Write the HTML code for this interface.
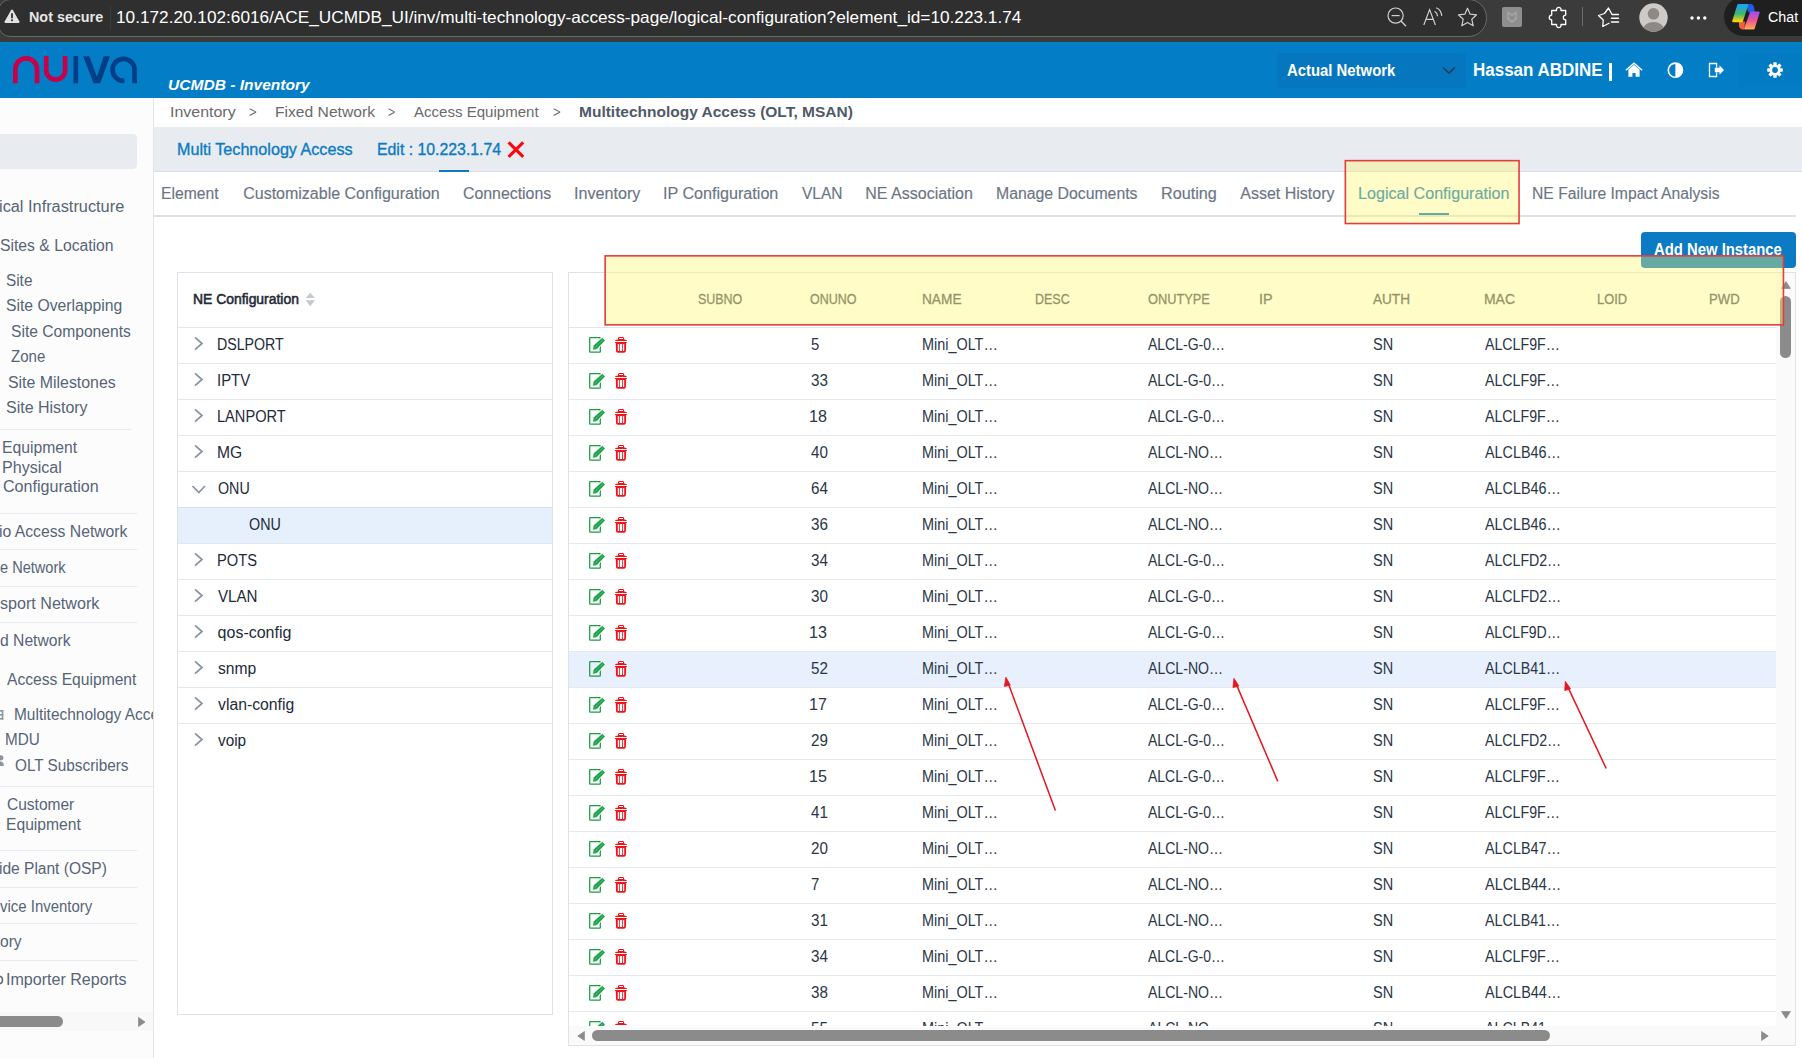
<!DOCTYPE html>
<html><head><meta charset="utf-8"><style>
*{box-sizing:border-box}
html,body{margin:0;padding:0;width:1802px;height:1058px;overflow:hidden;background:#fff;font-family:"Liberation Sans",sans-serif}
.t{position:absolute;white-space:pre;line-height:1;transform-origin:0 0}
.a{position:absolute}
.ic{position:absolute;overflow:visible}
.hl{position:absolute;height:1px;background:#e6e8ec}
.hl2{position:absolute;height:1px;background:#e3e7ed}
.sl{position:absolute;height:1px;background:#e6e9ee}
.clip{position:absolute;overflow:hidden}
</style></head><body>
<!-- browser chrome -->
<div class="a" style="left:0;top:0;width:1802px;height:42px;background:#3b3b3b"></div>
<div class="a" style="left:-2.5px;top:-0.6px;width:1489.5px;height:37.6px;background:#2f2f2f;border:1.3px solid #6a6a6a;border-radius:12px 18.6px 18.6px 12px"></div>
<div class="a" style="left:110px;top:6px;width:1px;height:24px;background:#3a3a3a"></div>
<svg class="ic" style="left:4px;top:9px" width="16" height="15" viewBox="0 0 16 15"><path d="M8 0.6 Q8.6 0.6 9 1.3 L15.4 12.6 Q15.9 13.8 14.6 14 H1.4 Q0.1 13.8 0.6 12.6 L7 1.3 Q7.4 0.6 8 0.6Z" fill="#e2e2e2"/><rect x="7.1" y="4.3" width="1.8" height="5" fill="#2f2f2f"/><rect x="7.1" y="10.4" width="1.8" height="1.8" fill="#2f2f2f"/></svg>
<svg class="ic" style="left:1386px;top:6px" width="22" height="22" viewBox="0 0 22 22"><circle cx="9.6" cy="9.6" r="7.6" fill="none" stroke="#cfcfcf" stroke-width="1.2"/><line x1="15" y1="15" x2="20" y2="20.2" stroke="#cfcfcf" stroke-width="1.3"/><line x1="5.6" y1="9.6" x2="13.6" y2="9.6" stroke="#cfcfcf" stroke-width="1.2"/></svg>
<svg class="ic" style="left:1423px;top:7px" width="21" height="19" viewBox="0 0 21 19"><path d="M0.8 18 L6.6 2.6 L12.4 18 M3 12.4 H10.2" fill="none" stroke="#cfcfcf" stroke-width="1.2"/><path d="M11.5 4.2 Q14.2 5.6 14.6 9.2 M13.2 0.8 Q18 2.6 18.8 8.8" fill="none" stroke="#cfcfcf" stroke-width="1.2"/></svg>
<svg class="ic" style="left:1457px;top:7px" width="21" height="21" viewBox="0 0 21 21"><path d="M10.5 1.2 L13.2 7.2 L19.6 7.8 L14.8 12.2 L16.2 18.8 L10.5 15.4 L4.8 18.8 L6.2 12.2 L1.4 7.8 L7.8 7.2 Z" fill="none" stroke="#cfcfcf" stroke-width="1.2" stroke-linejoin="round"/></svg>
<div class="a" style="left:1502px;top:7px;width:20px;height:20px;background:#8e8e8e;border-radius:2px"></div>
<svg class="ic" style="left:1505px;top:10px" width="14" height="14" viewBox="0 0 14 14"><path d="M3 2.5 L7 5 L11 2.5 V9 L7 12 L3 9 Z" fill="none" stroke="#a4a4a4" stroke-width="1.6"/></svg>
<svg class="ic" style="left:1548px;top:7px" width="22" height="22" viewBox="0 0 22 22"><path d="M3.7 3.5 H8.6 A2.3 2.3 0 1 1 12.9 3.5 H17.7 V8.1 A2.4 2.4 0 0 0 17.7 12.9 V17.5 H12.9 A2.3 2.3 0 1 1 8.6 17.5 H3.7 V12.9 A2.4 2.4 0 0 1 3.7 8.1 Z" fill="none" stroke="#ffffff" stroke-width="1.3" stroke-linejoin="round"/></svg>
<div class="a" style="left:1582px;top:7px;width:1px;height:19px;background:#6a6a6a"></div>
<svg class="ic" style="left:1596px;top:5px" width="24" height="24" viewBox="0 0 24 24"><path d="M13 18.25 L6.75 21.5 L7.25 15 L2.5 10.5 L8.5 8.5 L12.5 3 L16 9.5 H22.5" fill="none" stroke="#fff" stroke-width="1.3" stroke-linejoin="round" stroke-linecap="round"/><path d="M15.5 13.25 H22.5 M15.5 17 H22.5" stroke="#fff" stroke-width="1.5" stroke-linecap="round"/></svg>
<svg class="ic" style="left:1638.5px;top:2.5px" width="29" height="29" viewBox="0 0 29 29"><defs><clipPath id="pc"><circle cx="14.5" cy="14.5" r="14.2"/></clipPath></defs><circle cx="14.5" cy="14.5" r="14.2" fill="#cdcac7"/><g clip-path="url(#pc)"><circle cx="14.5" cy="10.8" r="5.8" fill="#8c8986"/><ellipse cx="14.5" cy="26.5" rx="10.5" ry="7.6" fill="#8c8986"/></g></svg>
<svg class="ic" style="left:1689px;top:14.5px" width="19" height="6" viewBox="0 0 19 6"><circle cx="3" cy="3" r="1.7" fill="#fff"/><circle cx="9.4" cy="3" r="1.7" fill="#fff"/><circle cx="15.8" cy="3" r="1.7" fill="#fff"/></svg>
<div class="a" style="left:1724px;top:-3px;width:110px;height:39px;background:#1f1f1f;border-radius:20px"></div>
<svg class="ic" style="left:1730px;top:3px" width="32" height="29" viewBox="0 0 32 29"><defs><linearGradient id="g1" x1="0" y1="0" x2="0" y2="1"><stop offset="0" stop-color="#1ba2f5"/><stop offset="0.55" stop-color="#3cba6a"/><stop offset="1" stop-color="#f6d50c"/></linearGradient><linearGradient id="g2" x1="0" y1="0" x2="0" y2="1"><stop offset="0" stop-color="#a24df0"/><stop offset="0.5" stop-color="#ef5690"/><stop offset="1" stop-color="#f9a35a"/></linearGradient></defs>
<path d="M16.5 1.6 H20.5 Q23 1.8 23.6 5 L24.2 9 H19 Z" fill="#1f5fe0" stroke="#1f5fe0" stroke-width="1.2" stroke-linejoin="round"/>
<path d="M9.5 19 H14.5 L13.6 26 H11.8 Q10 25.6 9.6 23 Z" fill="#f0603a" stroke="#f0603a" stroke-width="1.2" stroke-linejoin="round"/>
<path d="M8.4 2.1 H17.1 L11.8 18.2 H3.3 Z" fill="url(#g1)" stroke="url(#g1)" stroke-width="2.2" stroke-linejoin="round"/>
<path d="M21.2 9.5 H28.6 L23.6 25.5 H15.2 Z" fill="url(#g2)" stroke="url(#g2)" stroke-width="2.2" stroke-linejoin="round"/></svg>
<div class="t" style="left:28.67px;top:9.0px;font-size:15.5px;font-weight:700;color:#e6e6e6;transform:scaleX(0.9259);">Not secure</div>
<div class="t" style="left:116.36px;top:8.5px;font-size:16.5px;color:#ffffff;transform:scaleX(1.0428);">10.172.20.102:6016/ACE_UCMDB_UI/inv/multi-technology-access-page/logical-configuration?element_id=10.223.1.74</div>
<div class="t" style="left:1767.90px;top:9.2px;font-size:15.5px;color:#ffffff;transform:scaleX(0.9212);">Chat</div>
<!-- header -->
<div class="a" style="left:0;top:42px;width:1802px;height:56px;background:#037dc6"></div>
<svg class="ic" style="left:13px;top:56px" width="125" height="28" viewBox="0 0 125 28"><g fill="none" stroke-width="4.7" stroke-linecap="butt"><path d="M2.35 27.3 V13.2 A10.85 10.85 0 0 1 24.05 13.2 V27.3" stroke="#c8004a"/><path d="M33.2 0 V14.2 A9.45 9.45 0 0 0 52.1 14.2 V0" stroke="#c8004a"/><path d="M62.8 0 V27.3" stroke="#003f87"/><path d="M70.1 0.2 H76.3 L83.9 20.8 L90.7 0.2 H96.9 L87.2 27.3 H80.6 Z" fill="#003f87" stroke="none"/><path d="M121.6 27.3 V13.8 A11 11 0 1 0 110.6 24.8 H111.4" stroke="#003f87"/></g></svg>
<div class="a" style="left:1277px;top:53px;width:189px;height:35px;background:#0677be;border-radius:4px"></div>
<svg class="ic" style="left:1442px;top:66px" width="14" height="9" viewBox="0 0 14 9"><polyline points="1,1.5 7,7.2 13,1.5" fill="none" stroke="#173d63" stroke-width="1.6"/></svg>
<div class="a" style="left:1609px;top:63px;width:3.2px;height:17.5px;background:#fff"></div>
<div class="a" style="left:1738px;top:53.5px;width:64px;height:33.5px;background:#037bc3"></div>
<svg class="ic" style="left:1625px;top:62px" width="18" height="16" viewBox="0 0 18 16"><polyline points="0.8,8.2 9,1.2 17.2,8.2" fill="none" stroke="#fff" stroke-width="1.3"/><path d="M3.4 7.4 L9 2.8 L14.6 7.4 V14.8 H10.6 V11 H7.4 V14.8 H3.4 Z" fill="#fff"/></svg>
<svg class="ic" style="left:1666.5px;top:62px" width="17" height="17" viewBox="0 0 17 17"><circle cx="8.4" cy="8.2" r="7.1" fill="none" stroke="#fff" stroke-width="1.6"/><path d="M8.4 1.1 A7.1 7.1 0 0 1 8.4 15.3 Z" fill="#fff"/></svg>
<svg class="ic" style="left:1708px;top:62px" width="17" height="16" viewBox="0 0 17 16"><path d="M8.6 5.6 V1.5 H1.5 V14.5 H8.6 V10.6" fill="none" stroke="#fff" stroke-width="1.3"/><path d="M6.8 5.8 H11.5 V3.2 L16 8 L11.5 12.8 V10.3 H6.8 Z" fill="#fff"/></svg>
<svg class="ic" style="left:1766.5px;top:62px" width="16" height="16" viewBox="0 0 16 16"><g fill="#fff"><circle cx="8" cy="8" r="5.6"/><rect x="6.3" y="0.2" width="3.4" height="3" rx="0.6"/><rect x="6.3" y="12.8" width="3.4" height="3" rx="0.6"/><rect x="0.2" y="6.3" width="3" height="3.4" rx="0.6"/><rect x="12.8" y="6.3" width="3" height="3.4" rx="0.6"/><rect x="6.3" y="0.2" width="3.4" height="3" rx="0.6" transform="rotate(45 8 8)"/><rect x="6.3" y="12.8" width="3.4" height="3" rx="0.6" transform="rotate(45 8 8)"/><rect x="0.2" y="6.3" width="3" height="3.4" rx="0.6" transform="rotate(45 8 8)"/><rect x="12.8" y="6.3" width="3" height="3.4" rx="0.6" transform="rotate(45 8 8)"/></g><circle cx="8" cy="8" r="2.9" fill="#037bc3"/></svg>
<div class="t" style="left:168.30px;top:77.7px;font-size:14.5px;font-weight:700;font-style:italic;color:#ffffff;transform:scaleX(1.0725);">UCMDB - Inventory</div>
<div class="t" style="left:1286.90px;top:62.8px;font-size:16px;font-weight:700;color:#ffffff;transform:scaleX(0.9299);">Actual Network</div>
<div class="t" style="left:1473.03px;top:61.8px;font-size:17.5px;font-weight:700;color:#ffffff;transform:scaleX(0.9696);">Hassan ABDINE</div>
<!-- sidebar -->
<div class="a" style="left:0;top:98px;width:153px;height:960px;background:#fcfcfd"></div>
<div class="a" style="left:153px;top:98px;width:1px;height:960px;background:#e1e5ea"></div>
<div class="a" style="left:0;top:134px;width:137px;height:35px;background:#e8ebf0;border-radius:0 4px 4px 0"></div>
<div class="sl" style="left:0;top:429px;width:131px"></div><div class="sl" style="left:0;top:513px;width:137px"></div><div class="sl" style="left:0;top:549px;width:137px"></div><div class="sl" style="left:0;top:586px;width:137px"></div><div class="sl" style="left:0;top:622px;width:137px"></div><div class="sl" style="left:0;top:786px;width:153px"></div><div class="sl" style="left:0;top:850px;width:137px"></div><div class="sl" style="left:0;top:887px;width:137px"></div><div class="sl" style="left:0;top:923px;width:137px"></div><div class="sl" style="left:0;top:960px;width:137px"></div>
<div class="clip" style="left:0;top:98px;width:153px;height:914px"><div class="a" style="left:0;top:-98px;width:153px;height:1058px">
<div class="t" style="left:-1.02px;top:199.4px;font-size:16px;color:#566476;transform:scaleX(1.0204);">ical Infrastructure</div>
<div class="t" style="left:0.00px;top:238.4px;font-size:16px;color:#566476;transform:scaleX(0.9823);">Sites &amp; Location</div>
<div class="t" style="left:5.70px;top:273.0px;font-size:16px;color:#566476;transform:scaleX(0.9577);">Site</div>
<div class="t" style="left:5.70px;top:298.3px;font-size:16px;color:#566476;transform:scaleX(0.9822);">Site Overlapping</div>
<div class="t" style="left:10.60px;top:323.6px;font-size:16px;color:#566476;transform:scaleX(0.9761);">Site Components</div>
<div class="t" style="left:10.60px;top:348.6px;font-size:16px;color:#566476;transform:scaleX(0.9407);">Zone</div>
<div class="t" style="left:8.30px;top:374.8px;font-size:16px;color:#566476;transform:scaleX(0.9927);">Site Milestones</div>
<div class="t" style="left:5.70px;top:400.1px;font-size:16px;color:#566476;transform:scaleX(0.9976);">Site History</div>
<div class="t" style="left:2.32px;top:440.1px;font-size:16px;color:#566476;transform:scaleX(0.9810);">Equipment</div>
<div class="t" style="left:2.30px;top:460.1px;font-size:16px;color:#566476;transform:scaleX(1.0030);">Physical</div>
<div class="t" style="left:3.30px;top:479.0px;font-size:16px;color:#566476;transform:scaleX(1.0045);">Configuration</div>
<div class="t" style="left:-0.98px;top:524.0px;font-size:16px;color:#566476;transform:scaleX(0.9826);">io Access Network</div>
<div class="t" style="left:0.00px;top:560.3px;font-size:16px;color:#566476;transform:scaleX(0.9107);">e Network</div>
<div class="t" style="left:0.00px;top:596.2px;font-size:16px;color:#566476;transform:scaleX(1.0061);">sport Network</div>
<div class="t" style="left:0.00px;top:633.2px;font-size:16px;color:#566476;transform:scaleX(0.9791);">d Network</div>
<div class="t" style="left:7.30px;top:671.8px;font-size:16px;color:#566476;transform:scaleX(0.9762);">Access Equipment</div>
<div class="t" style="left:5.05px;top:732.3px;font-size:16px;color:#566476;transform:scaleX(0.9546);">MDU</div>
<div class="t" style="left:14.80px;top:758.1px;font-size:16px;color:#566476;transform:scaleX(0.9567);">OLT Subscribers</div>
<div class="t" style="left:7.30px;top:797.3px;font-size:16px;color:#566476;transform:scaleX(0.9697);">Customer</div>
<div class="t" style="left:6.32px;top:817.4px;font-size:16px;color:#566476;transform:scaleX(0.9783);">Equipment</div>
<div class="t" style="left:-0.97px;top:861.0px;font-size:16px;color:#566476;transform:scaleX(0.9706);">ide Plant (OSP)</div>
<div class="t" style="left:0.00px;top:898.6px;font-size:16px;color:#566476;transform:scaleX(0.9340);">vice Inventory</div>
<div class="t" style="left:0.00px;top:933.8px;font-size:16px;color:#566476;transform:scaleX(0.9718);">ory</div>
<div class="t" style="left:5.80px;top:971.6px;font-size:16px;color:#566476;transform:scaleX(1.0039);">Importer Reports</div>
<div class="t" style="left:14.13px;top:707.2px;font-size:16px;color:#566476;transform:scaleX(0.9652);">Multitechnology Access</div>
</div></div>
<svg class="ic" style="left:0;top:709px" width="4" height="13" viewBox="0 0 4 13"><rect x="0" y="1" width="3.3" height="1.6" fill="#8a94a2"/><rect x="0" y="5" width="3.3" height="1.6" fill="#8a94a2"/><rect x="0" y="9" width="3.3" height="1.6" fill="#8a94a2"/><rect x="1.7" y="1" width="1.6" height="9.6" fill="#8a94a2"/></svg>
<svg class="ic" style="left:0;top:755px" width="4" height="12" viewBox="0 0 4 12"><circle cx="0.8" cy="2.8" r="2.6" fill="#8a94a2"/><path d="M-4 11 Q-4 6.4 0.8 6.4 Q3.8 6.4 3.8 11 Z" fill="#8a94a2"/></svg>
<svg class="ic" style="left:0;top:974.5px" width="3" height="10" viewBox="0 0 3 10"><path d="M0 1.2 Q2.5 2 2.5 5 Q2.5 8 0 8.8" fill="none" stroke="#566476" stroke-width="1.5"/></svg>
<div class="a" style="left:0;top:1012px;width:153px;height:19px;background:#f8f8f8"></div>
<div class="a" style="left:-6px;top:1016.3px;width:69px;height:10.6px;background:#8b8b8b;border-radius:5.3px"></div>
<svg class="ic" style="left:138px;top:1017px" width="8" height="10" viewBox="0 0 8 10"><path d="M0.5 0.5 L7 5 L0.5 9.5 Z" fill="#8b8b8b" stroke="#8b8b8b" stroke-width="0.8" stroke-linejoin="round"/></svg>
<!-- breadcrumb / tab header -->
<div class="a" style="left:154px;top:127px;width:1648px;height:45px;background:#e8ebf0;border-bottom:1px solid #d8dde4"></div>
<div class="a" style="left:439px;top:169.8px;width:30px;height:2.6px;background:#0b7bc3"></div>
<svg class="ic" style="left:507px;top:141px" width="18" height="17" viewBox="0 0 18 17"><path d="M1.6 1.4 L16.2 15.8 M16.2 1.4 L1.6 15.8" stroke="#f7090f" stroke-width="3.1"/></svg>
<div class="a" style="left:154px;top:215px;width:1642px;height:2px;background:#dcdfe4"></div>
<div class="a" style="left:1419px;top:212.6px;width:30px;height:2.4px;background:#0b7bc3"></div>
<div class="a" style="left:1641px;top:232px;width:155px;height:36px;background:#0b7bc3;border-radius:4px"></div>
<!-- NE config panel -->
<div class="a" style="left:177px;top:272px;width:376px;height:743px;border:1px solid #dde2ea"></div>
<div class="a" style="left:178px;top:507px;width:374px;height:36px;background:#e6f0fc"></div>
<div class="hl2" style="left:178px;top:327px;width:374px"></div><div class="hl2" style="left:178px;top:363px;width:374px"></div><div class="hl2" style="left:178px;top:399px;width:374px"></div><div class="hl2" style="left:178px;top:435px;width:374px"></div><div class="hl2" style="left:178px;top:471px;width:374px"></div><div class="hl2" style="left:178px;top:507px;width:374px"></div><div class="hl2" style="left:178px;top:543px;width:374px"></div><div class="hl2" style="left:178px;top:579px;width:374px"></div><div class="hl2" style="left:178px;top:615px;width:374px"></div><div class="hl2" style="left:178px;top:651px;width:374px"></div><div class="hl2" style="left:178px;top:687px;width:374px"></div><div class="hl2" style="left:178px;top:723px;width:374px"></div>
<div class="a" style="left:178px;top:507px;width:374px;height:1px;background:#d6dfea"></div>
<svg class="ic" style="left:193px;top:336px" width="12" height="16" viewBox="0 0 12 16"><polyline points="2,1.3 9,7.5 2,13.7" fill="none" stroke="#8792a1" stroke-width="1.7"/></svg><svg class="ic" style="left:193px;top:372px" width="12" height="16" viewBox="0 0 12 16"><polyline points="2,1.3 9,7.5 2,13.7" fill="none" stroke="#8792a1" stroke-width="1.7"/></svg><svg class="ic" style="left:193px;top:408px" width="12" height="16" viewBox="0 0 12 16"><polyline points="2,1.3 9,7.5 2,13.7" fill="none" stroke="#8792a1" stroke-width="1.7"/></svg><svg class="ic" style="left:193px;top:444px" width="12" height="16" viewBox="0 0 12 16"><polyline points="2,1.3 9,7.5 2,13.7" fill="none" stroke="#8792a1" stroke-width="1.7"/></svg><svg class="ic" style="left:193px;top:552px" width="12" height="16" viewBox="0 0 12 16"><polyline points="2,1.3 9,7.5 2,13.7" fill="none" stroke="#8792a1" stroke-width="1.7"/></svg><svg class="ic" style="left:193px;top:588px" width="12" height="16" viewBox="0 0 12 16"><polyline points="2,1.3 9,7.5 2,13.7" fill="none" stroke="#8792a1" stroke-width="1.7"/></svg><svg class="ic" style="left:193px;top:624px" width="12" height="16" viewBox="0 0 12 16"><polyline points="2,1.3 9,7.5 2,13.7" fill="none" stroke="#8792a1" stroke-width="1.7"/></svg><svg class="ic" style="left:193px;top:660px" width="12" height="16" viewBox="0 0 12 16"><polyline points="2,1.3 9,7.5 2,13.7" fill="none" stroke="#8792a1" stroke-width="1.7"/></svg><svg class="ic" style="left:193px;top:696px" width="12" height="16" viewBox="0 0 12 16"><polyline points="2,1.3 9,7.5 2,13.7" fill="none" stroke="#8792a1" stroke-width="1.7"/></svg><svg class="ic" style="left:193px;top:732px" width="12" height="16" viewBox="0 0 12 16"><polyline points="2,1.3 9,7.5 2,13.7" fill="none" stroke="#8792a1" stroke-width="1.7"/></svg>
<svg class="ic" style="left:191px;top:484px" width="16" height="11" viewBox="0 0 16 11"><polyline points="1.5,2 7.8,8.6 14,2" fill="none" stroke="#8792a1" stroke-width="1.7"/></svg>
<svg class="ic" style="left:305px;top:291.5px" width="11" height="15" viewBox="0 0 11 15"><path d="M5.2 0.8 L10 6 H0.6 Z" fill="#c5c9d0"/><path d="M5.2 14.2 L10 8.2 H0.6 Z" fill="#c5c9d0"/></svg>
<div class="t" style="left:170.37px;top:104.0px;font-size:15.5px;color:#6a6a6a;transform:scaleX(1.0301);">Inventory</div>
<div class="t" style="left:249.30px;top:104.0px;font-size:15.5px;color:#6a6a6a;transform:scaleX(0.8444);">&gt;</div>
<div class="t" style="left:274.89px;top:104.0px;font-size:15.5px;color:#6a6a6a;transform:scaleX(1.0091);">Fixed Network</div>
<div class="t" style="left:388.10px;top:104.0px;font-size:15.5px;color:#6a6a6a;transform:scaleX(0.8000);">&gt;</div>
<div class="t" style="left:414.10px;top:104.0px;font-size:15.5px;color:#6a6a6a;transform:scaleX(0.9709);">Access Equipment</div>
<div class="t" style="left:553.00px;top:104.0px;font-size:15.5px;color:#6a6a6a;transform:scaleX(0.8444);">&gt;</div>
<div class="t" style="left:579.00px;top:104.0px;font-size:15.5px;font-weight:700;color:#4f5a68;">Multitechnology Access (OLT, MSAN)</div>
<div class="t" style="left:177.22px;top:141.0px;font-size:16.5px;color:#0b7bc3;transform:scaleX(0.9782);-webkit-text-stroke:0.35px #0b7bc3;">Multi Technology Access</div>
<div class="t" style="left:377.04px;top:141.0px;font-size:16.5px;color:#0b7bc3;transform:scaleX(0.9596);-webkit-text-stroke:0.35px #0b7bc3;">Edit : 10.223.1.74</div>
<div class="t" style="left:161.22px;top:186.0px;font-size:16px;color:#6b7585;transform:scaleX(0.9803);-webkit-text-stroke:0.15px #6b7585;">Element</div>
<div class="t" style="left:243.20px;top:186.0px;font-size:16px;color:#6b7585;-webkit-text-stroke:0.15px #6b7585;">Customizable Configuration</div>
<div class="t" style="left:463.00px;top:186.0px;font-size:16px;color:#6b7585;transform:scaleX(0.9916);-webkit-text-stroke:0.15px #6b7585;">Connections</div>
<div class="t" style="left:574.09px;top:186.0px;font-size:16px;color:#6b7585;transform:scaleX(1.0075);-webkit-text-stroke:0.15px #6b7585;">Inventory</div>
<div class="t" style="left:663.39px;top:186.0px;font-size:16px;color:#6b7585;transform:scaleX(1.0077);-webkit-text-stroke:0.15px #6b7585;">IP Configuration</div>
<div class="t" style="left:801.80px;top:186.0px;font-size:16px;color:#6b7585;transform:scaleX(0.9699);-webkit-text-stroke:0.15px #6b7585;">VLAN</div>
<div class="t" style="left:865.30px;top:186.0px;font-size:16px;color:#6b7585;-webkit-text-stroke:0.15px #6b7585;">NE Association</div>
<div class="t" style="left:996.21px;top:186.0px;font-size:16px;color:#6b7585;transform:scaleX(0.9881);-webkit-text-stroke:0.15px #6b7585;">Manage Documents</div>
<div class="t" style="left:1161.19px;top:186.0px;font-size:16px;color:#6b7585;transform:scaleX(1.0103);-webkit-text-stroke:0.15px #6b7585;">Routing</div>
<div class="t" style="left:1240.30px;top:186.0px;font-size:16px;color:#6b7585;-webkit-text-stroke:0.15px #6b7585;">Asset History</div>
<div class="t" style="left:1358.29px;top:186.0px;font-size:16px;color:#0b7bc3;transform:scaleX(1.0073);-webkit-text-stroke:0.15px #0b7bc3;">Logical Configuration</div>
<div class="t" style="left:1532.02px;top:186.0px;font-size:16px;color:#6b7585;transform:scaleX(0.9808);-webkit-text-stroke:0.15px #6b7585;">NE Failure Impact Analysis</div>
<div class="t" style="left:1654.30px;top:241.1px;font-size:16.5px;font-weight:700;color:#ffffff;transform:scaleX(0.8997);">Add New Instance</div>
<div class="t" style="left:192.71px;top:292.0px;font-size:14px;color:#1f2a37;transform:scaleX(0.9931);-webkit-text-stroke:0.55px #1f2a37;">NE Configuration</div>
<div class="t" style="left:216.71px;top:337.0px;font-size:16px;color:#1e2a3a;transform:scaleX(0.8872);">DSLPORT</div>
<div class="t" style="left:216.67px;top:373.0px;font-size:16px;color:#1e2a3a;transform:scaleX(0.9343);">IPTV</div>
<div class="t" style="left:216.69px;top:409.0px;font-size:16px;color:#1e2a3a;transform:scaleX(0.9127);">LANPORT</div>
<div class="t" style="left:216.62px;top:445.0px;font-size:16px;color:#1e2a3a;transform:scaleX(0.9783);">MG</div>
<div class="t" style="left:217.60px;top:481.0px;font-size:16px;color:#1e2a3a;transform:scaleX(0.8914);">ONU</div>
<div class="t" style="left:249.10px;top:517.0px;font-size:16px;color:#1e2a3a;transform:scaleX(0.8943);">ONU</div>
<div class="t" style="left:216.68px;top:553.0px;font-size:16px;color:#1e2a3a;transform:scaleX(0.9167);">POTS</div>
<div class="t" style="left:217.60px;top:589.0px;font-size:16px;color:#1e2a3a;transform:scaleX(0.9456);">VLAN</div>
<div class="t" style="left:217.60px;top:625.0px;font-size:16px;color:#1e2a3a;">qos-config</div>
<div class="t" style="left:217.60px;top:661.0px;font-size:16px;color:#1e2a3a;transform:scaleX(0.9789);">snmp</div>
<div class="t" style="left:217.60px;top:697.0px;font-size:16px;color:#1e2a3a;transform:scaleX(0.9846);">vlan-config</div>
<div class="t" style="left:217.60px;top:733.0px;font-size:16px;color:#1e2a3a;transform:scaleX(0.9575);">voip</div>
<div class="t" style="left:698.00px;top:291.7px;font-size:14px;color:#4f5866;transform:scaleX(0.8898);-webkit-text-stroke:0.3px #4f5866;">SUBNO</div>
<div class="t" style="left:810.47px;top:291.7px;font-size:14px;color:#4f5866;transform:scaleX(0.8924);-webkit-text-stroke:0.3px #4f5866;">ONUNO</div>
<div class="t" style="left:921.96px;top:291.7px;font-size:14px;color:#4f5866;transform:scaleX(0.9767);-webkit-text-stroke:0.3px #4f5866;">NAME</div>
<div class="t" style="left:1034.52px;top:291.7px;font-size:14px;color:#4f5866;transform:scaleX(0.8919);-webkit-text-stroke:0.3px #4f5866;">DESC</div>
<div class="t" style="left:1147.88px;top:291.7px;font-size:14px;color:#4f5866;transform:scaleX(0.9133);-webkit-text-stroke:0.3px #4f5866;">ONUTYPE</div>
<div class="t" style="left:1259.32px;top:291.7px;font-size:14px;color:#4f5866;transform:scaleX(1.0261);-webkit-text-stroke:0.3px #4f5866;">IP</div>
<div class="t" style="left:1372.82px;top:291.7px;font-size:14px;color:#4f5866;transform:scaleX(0.9703);-webkit-text-stroke:0.3px #4f5866;">AUTH</div>
<div class="t" style="left:1484.29px;top:291.7px;font-size:14px;color:#4f5866;transform:scaleX(0.9967);-webkit-text-stroke:0.3px #4f5866;">MAC</div>
<div class="t" style="left:1596.84px;top:291.7px;font-size:14px;color:#4f5866;transform:scaleX(0.9219);-webkit-text-stroke:0.3px #4f5866;">LOID</div>
<div class="t" style="left:1709.29px;top:291.7px;font-size:14px;color:#4f5866;transform:scaleX(0.9381);-webkit-text-stroke:0.3px #4f5866;">PWD</div>
<!-- grid -->
<div class="a" style="left:568px;top:272px;width:1228px;height:774px;border:1px solid #dde2ea"></div>
<div class="a" style="left:569px;top:327px;width:1207px;height:1px;background:#e2e5ea"></div>
<div class="clip" style="left:569px;top:328px;width:1207px;height:698px">
 <div class="a" style="left:0;top:323px;width:1207px;height:36px;background:#e7f0fc"></div>
</div>
<div class="hl" style="left:569px;top:363px;width:1207px"></div><div class="hl" style="left:569px;top:399px;width:1207px"></div><div class="hl" style="left:569px;top:435px;width:1207px"></div><div class="hl" style="left:569px;top:471px;width:1207px"></div><div class="hl" style="left:569px;top:507px;width:1207px"></div><div class="hl" style="left:569px;top:543px;width:1207px"></div><div class="hl" style="left:569px;top:579px;width:1207px"></div><div class="hl" style="left:569px;top:615px;width:1207px"></div><div class="hl" style="left:569px;top:651px;width:1207px"></div><div class="hl" style="left:569px;top:687px;width:1207px"></div><div class="hl" style="left:569px;top:723px;width:1207px"></div><div class="hl" style="left:569px;top:759px;width:1207px"></div><div class="hl" style="left:569px;top:795px;width:1207px"></div><div class="hl" style="left:569px;top:831px;width:1207px"></div><div class="hl" style="left:569px;top:867px;width:1207px"></div><div class="hl" style="left:569px;top:903px;width:1207px"></div><div class="hl" style="left:569px;top:939px;width:1207px"></div><div class="hl" style="left:569px;top:975px;width:1207px"></div><div class="hl" style="left:569px;top:1011px;width:1207px"></div>
<div class="clip" style="left:0;top:328px;width:1776px;height:698px">
<div class="a" style="left:0;top:-328px;width:1776px;height:1058px">
<svg class="ic" style="left:588px;top:336px" width="18" height="18" viewBox="0 0 18 18"><rect x="1.7" y="1.5" width="10.6" height="14.7" rx="0.6" fill="none" stroke="#17a045" stroke-width="1.25"/><path d="M5.1 13.6 L6.1 9.3 L14.4 2 L16.8 4.4 L8.8 12.8 Z" fill="#fff" stroke="#fff" stroke-width="2.2" stroke-linejoin="round"/><path d="M5.1 13.6 L6.1 9.3 L14.4 2 L16.8 4.4 L8.8 12.8 Z" fill="#17a045" stroke="#17a045" stroke-width="0.4" stroke-linejoin="round"/><path d="M6.7 11.8 L15.1 3.6" stroke="#fff" stroke-width="0.7" stroke-dasharray="0.9 1.3"/></svg><svg class="ic" style="left:614px;top:336px" width="14" height="18" viewBox="0 0 14 18"><path d="M0.9 5 Q1 3.6 3.8 3.4 L4.3 1.5 Q4.5 1 5.1 1 H9 Q9.6 1 9.8 1.5 L10.3 3.4 Q12.9 3.6 13 5 Z" fill="#f0141a"/><rect x="5.2" y="2" width="3.8" height="1" fill="#fff"/><rect x="0.9" y="6" width="12.1" height="1.1" rx="0.4" fill="#f0141a"/><path d="M1.8 7 H12.1 L11.9 15 Q11.8 16.8 10 16.8 H3.9 Q2.1 16.8 2 15 Z" fill="#f0141a"/><rect x="3.8" y="8" width="1.4" height="7" rx="0.6" fill="#fff"/><rect x="6" y="8" width="2.1" height="7" rx="0.6" fill="#fff"/><rect x="8.9" y="8" width="1.3" height="7" rx="0.6" fill="#fff"/></svg><svg class="ic" style="left:588px;top:372px" width="18" height="18" viewBox="0 0 18 18"><rect x="1.7" y="1.5" width="10.6" height="14.7" rx="0.6" fill="none" stroke="#17a045" stroke-width="1.25"/><path d="M5.1 13.6 L6.1 9.3 L14.4 2 L16.8 4.4 L8.8 12.8 Z" fill="#fff" stroke="#fff" stroke-width="2.2" stroke-linejoin="round"/><path d="M5.1 13.6 L6.1 9.3 L14.4 2 L16.8 4.4 L8.8 12.8 Z" fill="#17a045" stroke="#17a045" stroke-width="0.4" stroke-linejoin="round"/><path d="M6.7 11.8 L15.1 3.6" stroke="#fff" stroke-width="0.7" stroke-dasharray="0.9 1.3"/></svg><svg class="ic" style="left:614px;top:372px" width="14" height="18" viewBox="0 0 14 18"><path d="M0.9 5 Q1 3.6 3.8 3.4 L4.3 1.5 Q4.5 1 5.1 1 H9 Q9.6 1 9.8 1.5 L10.3 3.4 Q12.9 3.6 13 5 Z" fill="#f0141a"/><rect x="5.2" y="2" width="3.8" height="1" fill="#fff"/><rect x="0.9" y="6" width="12.1" height="1.1" rx="0.4" fill="#f0141a"/><path d="M1.8 7 H12.1 L11.9 15 Q11.8 16.8 10 16.8 H3.9 Q2.1 16.8 2 15 Z" fill="#f0141a"/><rect x="3.8" y="8" width="1.4" height="7" rx="0.6" fill="#fff"/><rect x="6" y="8" width="2.1" height="7" rx="0.6" fill="#fff"/><rect x="8.9" y="8" width="1.3" height="7" rx="0.6" fill="#fff"/></svg><svg class="ic" style="left:588px;top:408px" width="18" height="18" viewBox="0 0 18 18"><rect x="1.7" y="1.5" width="10.6" height="14.7" rx="0.6" fill="none" stroke="#17a045" stroke-width="1.25"/><path d="M5.1 13.6 L6.1 9.3 L14.4 2 L16.8 4.4 L8.8 12.8 Z" fill="#fff" stroke="#fff" stroke-width="2.2" stroke-linejoin="round"/><path d="M5.1 13.6 L6.1 9.3 L14.4 2 L16.8 4.4 L8.8 12.8 Z" fill="#17a045" stroke="#17a045" stroke-width="0.4" stroke-linejoin="round"/><path d="M6.7 11.8 L15.1 3.6" stroke="#fff" stroke-width="0.7" stroke-dasharray="0.9 1.3"/></svg><svg class="ic" style="left:614px;top:408px" width="14" height="18" viewBox="0 0 14 18"><path d="M0.9 5 Q1 3.6 3.8 3.4 L4.3 1.5 Q4.5 1 5.1 1 H9 Q9.6 1 9.8 1.5 L10.3 3.4 Q12.9 3.6 13 5 Z" fill="#f0141a"/><rect x="5.2" y="2" width="3.8" height="1" fill="#fff"/><rect x="0.9" y="6" width="12.1" height="1.1" rx="0.4" fill="#f0141a"/><path d="M1.8 7 H12.1 L11.9 15 Q11.8 16.8 10 16.8 H3.9 Q2.1 16.8 2 15 Z" fill="#f0141a"/><rect x="3.8" y="8" width="1.4" height="7" rx="0.6" fill="#fff"/><rect x="6" y="8" width="2.1" height="7" rx="0.6" fill="#fff"/><rect x="8.9" y="8" width="1.3" height="7" rx="0.6" fill="#fff"/></svg><svg class="ic" style="left:588px;top:444px" width="18" height="18" viewBox="0 0 18 18"><rect x="1.7" y="1.5" width="10.6" height="14.7" rx="0.6" fill="none" stroke="#17a045" stroke-width="1.25"/><path d="M5.1 13.6 L6.1 9.3 L14.4 2 L16.8 4.4 L8.8 12.8 Z" fill="#fff" stroke="#fff" stroke-width="2.2" stroke-linejoin="round"/><path d="M5.1 13.6 L6.1 9.3 L14.4 2 L16.8 4.4 L8.8 12.8 Z" fill="#17a045" stroke="#17a045" stroke-width="0.4" stroke-linejoin="round"/><path d="M6.7 11.8 L15.1 3.6" stroke="#fff" stroke-width="0.7" stroke-dasharray="0.9 1.3"/></svg><svg class="ic" style="left:614px;top:444px" width="14" height="18" viewBox="0 0 14 18"><path d="M0.9 5 Q1 3.6 3.8 3.4 L4.3 1.5 Q4.5 1 5.1 1 H9 Q9.6 1 9.8 1.5 L10.3 3.4 Q12.9 3.6 13 5 Z" fill="#f0141a"/><rect x="5.2" y="2" width="3.8" height="1" fill="#fff"/><rect x="0.9" y="6" width="12.1" height="1.1" rx="0.4" fill="#f0141a"/><path d="M1.8 7 H12.1 L11.9 15 Q11.8 16.8 10 16.8 H3.9 Q2.1 16.8 2 15 Z" fill="#f0141a"/><rect x="3.8" y="8" width="1.4" height="7" rx="0.6" fill="#fff"/><rect x="6" y="8" width="2.1" height="7" rx="0.6" fill="#fff"/><rect x="8.9" y="8" width="1.3" height="7" rx="0.6" fill="#fff"/></svg><svg class="ic" style="left:588px;top:480px" width="18" height="18" viewBox="0 0 18 18"><rect x="1.7" y="1.5" width="10.6" height="14.7" rx="0.6" fill="none" stroke="#17a045" stroke-width="1.25"/><path d="M5.1 13.6 L6.1 9.3 L14.4 2 L16.8 4.4 L8.8 12.8 Z" fill="#fff" stroke="#fff" stroke-width="2.2" stroke-linejoin="round"/><path d="M5.1 13.6 L6.1 9.3 L14.4 2 L16.8 4.4 L8.8 12.8 Z" fill="#17a045" stroke="#17a045" stroke-width="0.4" stroke-linejoin="round"/><path d="M6.7 11.8 L15.1 3.6" stroke="#fff" stroke-width="0.7" stroke-dasharray="0.9 1.3"/></svg><svg class="ic" style="left:614px;top:480px" width="14" height="18" viewBox="0 0 14 18"><path d="M0.9 5 Q1 3.6 3.8 3.4 L4.3 1.5 Q4.5 1 5.1 1 H9 Q9.6 1 9.8 1.5 L10.3 3.4 Q12.9 3.6 13 5 Z" fill="#f0141a"/><rect x="5.2" y="2" width="3.8" height="1" fill="#fff"/><rect x="0.9" y="6" width="12.1" height="1.1" rx="0.4" fill="#f0141a"/><path d="M1.8 7 H12.1 L11.9 15 Q11.8 16.8 10 16.8 H3.9 Q2.1 16.8 2 15 Z" fill="#f0141a"/><rect x="3.8" y="8" width="1.4" height="7" rx="0.6" fill="#fff"/><rect x="6" y="8" width="2.1" height="7" rx="0.6" fill="#fff"/><rect x="8.9" y="8" width="1.3" height="7" rx="0.6" fill="#fff"/></svg><svg class="ic" style="left:588px;top:516px" width="18" height="18" viewBox="0 0 18 18"><rect x="1.7" y="1.5" width="10.6" height="14.7" rx="0.6" fill="none" stroke="#17a045" stroke-width="1.25"/><path d="M5.1 13.6 L6.1 9.3 L14.4 2 L16.8 4.4 L8.8 12.8 Z" fill="#fff" stroke="#fff" stroke-width="2.2" stroke-linejoin="round"/><path d="M5.1 13.6 L6.1 9.3 L14.4 2 L16.8 4.4 L8.8 12.8 Z" fill="#17a045" stroke="#17a045" stroke-width="0.4" stroke-linejoin="round"/><path d="M6.7 11.8 L15.1 3.6" stroke="#fff" stroke-width="0.7" stroke-dasharray="0.9 1.3"/></svg><svg class="ic" style="left:614px;top:516px" width="14" height="18" viewBox="0 0 14 18"><path d="M0.9 5 Q1 3.6 3.8 3.4 L4.3 1.5 Q4.5 1 5.1 1 H9 Q9.6 1 9.8 1.5 L10.3 3.4 Q12.9 3.6 13 5 Z" fill="#f0141a"/><rect x="5.2" y="2" width="3.8" height="1" fill="#fff"/><rect x="0.9" y="6" width="12.1" height="1.1" rx="0.4" fill="#f0141a"/><path d="M1.8 7 H12.1 L11.9 15 Q11.8 16.8 10 16.8 H3.9 Q2.1 16.8 2 15 Z" fill="#f0141a"/><rect x="3.8" y="8" width="1.4" height="7" rx="0.6" fill="#fff"/><rect x="6" y="8" width="2.1" height="7" rx="0.6" fill="#fff"/><rect x="8.9" y="8" width="1.3" height="7" rx="0.6" fill="#fff"/></svg><svg class="ic" style="left:588px;top:552px" width="18" height="18" viewBox="0 0 18 18"><rect x="1.7" y="1.5" width="10.6" height="14.7" rx="0.6" fill="none" stroke="#17a045" stroke-width="1.25"/><path d="M5.1 13.6 L6.1 9.3 L14.4 2 L16.8 4.4 L8.8 12.8 Z" fill="#fff" stroke="#fff" stroke-width="2.2" stroke-linejoin="round"/><path d="M5.1 13.6 L6.1 9.3 L14.4 2 L16.8 4.4 L8.8 12.8 Z" fill="#17a045" stroke="#17a045" stroke-width="0.4" stroke-linejoin="round"/><path d="M6.7 11.8 L15.1 3.6" stroke="#fff" stroke-width="0.7" stroke-dasharray="0.9 1.3"/></svg><svg class="ic" style="left:614px;top:552px" width="14" height="18" viewBox="0 0 14 18"><path d="M0.9 5 Q1 3.6 3.8 3.4 L4.3 1.5 Q4.5 1 5.1 1 H9 Q9.6 1 9.8 1.5 L10.3 3.4 Q12.9 3.6 13 5 Z" fill="#f0141a"/><rect x="5.2" y="2" width="3.8" height="1" fill="#fff"/><rect x="0.9" y="6" width="12.1" height="1.1" rx="0.4" fill="#f0141a"/><path d="M1.8 7 H12.1 L11.9 15 Q11.8 16.8 10 16.8 H3.9 Q2.1 16.8 2 15 Z" fill="#f0141a"/><rect x="3.8" y="8" width="1.4" height="7" rx="0.6" fill="#fff"/><rect x="6" y="8" width="2.1" height="7" rx="0.6" fill="#fff"/><rect x="8.9" y="8" width="1.3" height="7" rx="0.6" fill="#fff"/></svg><svg class="ic" style="left:588px;top:588px" width="18" height="18" viewBox="0 0 18 18"><rect x="1.7" y="1.5" width="10.6" height="14.7" rx="0.6" fill="none" stroke="#17a045" stroke-width="1.25"/><path d="M5.1 13.6 L6.1 9.3 L14.4 2 L16.8 4.4 L8.8 12.8 Z" fill="#fff" stroke="#fff" stroke-width="2.2" stroke-linejoin="round"/><path d="M5.1 13.6 L6.1 9.3 L14.4 2 L16.8 4.4 L8.8 12.8 Z" fill="#17a045" stroke="#17a045" stroke-width="0.4" stroke-linejoin="round"/><path d="M6.7 11.8 L15.1 3.6" stroke="#fff" stroke-width="0.7" stroke-dasharray="0.9 1.3"/></svg><svg class="ic" style="left:614px;top:588px" width="14" height="18" viewBox="0 0 14 18"><path d="M0.9 5 Q1 3.6 3.8 3.4 L4.3 1.5 Q4.5 1 5.1 1 H9 Q9.6 1 9.8 1.5 L10.3 3.4 Q12.9 3.6 13 5 Z" fill="#f0141a"/><rect x="5.2" y="2" width="3.8" height="1" fill="#fff"/><rect x="0.9" y="6" width="12.1" height="1.1" rx="0.4" fill="#f0141a"/><path d="M1.8 7 H12.1 L11.9 15 Q11.8 16.8 10 16.8 H3.9 Q2.1 16.8 2 15 Z" fill="#f0141a"/><rect x="3.8" y="8" width="1.4" height="7" rx="0.6" fill="#fff"/><rect x="6" y="8" width="2.1" height="7" rx="0.6" fill="#fff"/><rect x="8.9" y="8" width="1.3" height="7" rx="0.6" fill="#fff"/></svg><svg class="ic" style="left:588px;top:624px" width="18" height="18" viewBox="0 0 18 18"><rect x="1.7" y="1.5" width="10.6" height="14.7" rx="0.6" fill="none" stroke="#17a045" stroke-width="1.25"/><path d="M5.1 13.6 L6.1 9.3 L14.4 2 L16.8 4.4 L8.8 12.8 Z" fill="#fff" stroke="#fff" stroke-width="2.2" stroke-linejoin="round"/><path d="M5.1 13.6 L6.1 9.3 L14.4 2 L16.8 4.4 L8.8 12.8 Z" fill="#17a045" stroke="#17a045" stroke-width="0.4" stroke-linejoin="round"/><path d="M6.7 11.8 L15.1 3.6" stroke="#fff" stroke-width="0.7" stroke-dasharray="0.9 1.3"/></svg><svg class="ic" style="left:614px;top:624px" width="14" height="18" viewBox="0 0 14 18"><path d="M0.9 5 Q1 3.6 3.8 3.4 L4.3 1.5 Q4.5 1 5.1 1 H9 Q9.6 1 9.8 1.5 L10.3 3.4 Q12.9 3.6 13 5 Z" fill="#f0141a"/><rect x="5.2" y="2" width="3.8" height="1" fill="#fff"/><rect x="0.9" y="6" width="12.1" height="1.1" rx="0.4" fill="#f0141a"/><path d="M1.8 7 H12.1 L11.9 15 Q11.8 16.8 10 16.8 H3.9 Q2.1 16.8 2 15 Z" fill="#f0141a"/><rect x="3.8" y="8" width="1.4" height="7" rx="0.6" fill="#fff"/><rect x="6" y="8" width="2.1" height="7" rx="0.6" fill="#fff"/><rect x="8.9" y="8" width="1.3" height="7" rx="0.6" fill="#fff"/></svg><svg class="ic" style="left:588px;top:660px" width="18" height="18" viewBox="0 0 18 18"><rect x="1.7" y="1.5" width="10.6" height="14.7" rx="0.6" fill="none" stroke="#17a045" stroke-width="1.25"/><path d="M5.1 13.6 L6.1 9.3 L14.4 2 L16.8 4.4 L8.8 12.8 Z" fill="#fff" stroke="#fff" stroke-width="2.2" stroke-linejoin="round"/><path d="M5.1 13.6 L6.1 9.3 L14.4 2 L16.8 4.4 L8.8 12.8 Z" fill="#17a045" stroke="#17a045" stroke-width="0.4" stroke-linejoin="round"/><path d="M6.7 11.8 L15.1 3.6" stroke="#fff" stroke-width="0.7" stroke-dasharray="0.9 1.3"/></svg><svg class="ic" style="left:614px;top:660px" width="14" height="18" viewBox="0 0 14 18"><path d="M0.9 5 Q1 3.6 3.8 3.4 L4.3 1.5 Q4.5 1 5.1 1 H9 Q9.6 1 9.8 1.5 L10.3 3.4 Q12.9 3.6 13 5 Z" fill="#f0141a"/><rect x="5.2" y="2" width="3.8" height="1" fill="#fff"/><rect x="0.9" y="6" width="12.1" height="1.1" rx="0.4" fill="#f0141a"/><path d="M1.8 7 H12.1 L11.9 15 Q11.8 16.8 10 16.8 H3.9 Q2.1 16.8 2 15 Z" fill="#f0141a"/><rect x="3.8" y="8" width="1.4" height="7" rx="0.6" fill="#fff"/><rect x="6" y="8" width="2.1" height="7" rx="0.6" fill="#fff"/><rect x="8.9" y="8" width="1.3" height="7" rx="0.6" fill="#fff"/></svg><svg class="ic" style="left:588px;top:696px" width="18" height="18" viewBox="0 0 18 18"><rect x="1.7" y="1.5" width="10.6" height="14.7" rx="0.6" fill="none" stroke="#17a045" stroke-width="1.25"/><path d="M5.1 13.6 L6.1 9.3 L14.4 2 L16.8 4.4 L8.8 12.8 Z" fill="#fff" stroke="#fff" stroke-width="2.2" stroke-linejoin="round"/><path d="M5.1 13.6 L6.1 9.3 L14.4 2 L16.8 4.4 L8.8 12.8 Z" fill="#17a045" stroke="#17a045" stroke-width="0.4" stroke-linejoin="round"/><path d="M6.7 11.8 L15.1 3.6" stroke="#fff" stroke-width="0.7" stroke-dasharray="0.9 1.3"/></svg><svg class="ic" style="left:614px;top:696px" width="14" height="18" viewBox="0 0 14 18"><path d="M0.9 5 Q1 3.6 3.8 3.4 L4.3 1.5 Q4.5 1 5.1 1 H9 Q9.6 1 9.8 1.5 L10.3 3.4 Q12.9 3.6 13 5 Z" fill="#f0141a"/><rect x="5.2" y="2" width="3.8" height="1" fill="#fff"/><rect x="0.9" y="6" width="12.1" height="1.1" rx="0.4" fill="#f0141a"/><path d="M1.8 7 H12.1 L11.9 15 Q11.8 16.8 10 16.8 H3.9 Q2.1 16.8 2 15 Z" fill="#f0141a"/><rect x="3.8" y="8" width="1.4" height="7" rx="0.6" fill="#fff"/><rect x="6" y="8" width="2.1" height="7" rx="0.6" fill="#fff"/><rect x="8.9" y="8" width="1.3" height="7" rx="0.6" fill="#fff"/></svg><svg class="ic" style="left:588px;top:732px" width="18" height="18" viewBox="0 0 18 18"><rect x="1.7" y="1.5" width="10.6" height="14.7" rx="0.6" fill="none" stroke="#17a045" stroke-width="1.25"/><path d="M5.1 13.6 L6.1 9.3 L14.4 2 L16.8 4.4 L8.8 12.8 Z" fill="#fff" stroke="#fff" stroke-width="2.2" stroke-linejoin="round"/><path d="M5.1 13.6 L6.1 9.3 L14.4 2 L16.8 4.4 L8.8 12.8 Z" fill="#17a045" stroke="#17a045" stroke-width="0.4" stroke-linejoin="round"/><path d="M6.7 11.8 L15.1 3.6" stroke="#fff" stroke-width="0.7" stroke-dasharray="0.9 1.3"/></svg><svg class="ic" style="left:614px;top:732px" width="14" height="18" viewBox="0 0 14 18"><path d="M0.9 5 Q1 3.6 3.8 3.4 L4.3 1.5 Q4.5 1 5.1 1 H9 Q9.6 1 9.8 1.5 L10.3 3.4 Q12.9 3.6 13 5 Z" fill="#f0141a"/><rect x="5.2" y="2" width="3.8" height="1" fill="#fff"/><rect x="0.9" y="6" width="12.1" height="1.1" rx="0.4" fill="#f0141a"/><path d="M1.8 7 H12.1 L11.9 15 Q11.8 16.8 10 16.8 H3.9 Q2.1 16.8 2 15 Z" fill="#f0141a"/><rect x="3.8" y="8" width="1.4" height="7" rx="0.6" fill="#fff"/><rect x="6" y="8" width="2.1" height="7" rx="0.6" fill="#fff"/><rect x="8.9" y="8" width="1.3" height="7" rx="0.6" fill="#fff"/></svg><svg class="ic" style="left:588px;top:768px" width="18" height="18" viewBox="0 0 18 18"><rect x="1.7" y="1.5" width="10.6" height="14.7" rx="0.6" fill="none" stroke="#17a045" stroke-width="1.25"/><path d="M5.1 13.6 L6.1 9.3 L14.4 2 L16.8 4.4 L8.8 12.8 Z" fill="#fff" stroke="#fff" stroke-width="2.2" stroke-linejoin="round"/><path d="M5.1 13.6 L6.1 9.3 L14.4 2 L16.8 4.4 L8.8 12.8 Z" fill="#17a045" stroke="#17a045" stroke-width="0.4" stroke-linejoin="round"/><path d="M6.7 11.8 L15.1 3.6" stroke="#fff" stroke-width="0.7" stroke-dasharray="0.9 1.3"/></svg><svg class="ic" style="left:614px;top:768px" width="14" height="18" viewBox="0 0 14 18"><path d="M0.9 5 Q1 3.6 3.8 3.4 L4.3 1.5 Q4.5 1 5.1 1 H9 Q9.6 1 9.8 1.5 L10.3 3.4 Q12.9 3.6 13 5 Z" fill="#f0141a"/><rect x="5.2" y="2" width="3.8" height="1" fill="#fff"/><rect x="0.9" y="6" width="12.1" height="1.1" rx="0.4" fill="#f0141a"/><path d="M1.8 7 H12.1 L11.9 15 Q11.8 16.8 10 16.8 H3.9 Q2.1 16.8 2 15 Z" fill="#f0141a"/><rect x="3.8" y="8" width="1.4" height="7" rx="0.6" fill="#fff"/><rect x="6" y="8" width="2.1" height="7" rx="0.6" fill="#fff"/><rect x="8.9" y="8" width="1.3" height="7" rx="0.6" fill="#fff"/></svg><svg class="ic" style="left:588px;top:804px" width="18" height="18" viewBox="0 0 18 18"><rect x="1.7" y="1.5" width="10.6" height="14.7" rx="0.6" fill="none" stroke="#17a045" stroke-width="1.25"/><path d="M5.1 13.6 L6.1 9.3 L14.4 2 L16.8 4.4 L8.8 12.8 Z" fill="#fff" stroke="#fff" stroke-width="2.2" stroke-linejoin="round"/><path d="M5.1 13.6 L6.1 9.3 L14.4 2 L16.8 4.4 L8.8 12.8 Z" fill="#17a045" stroke="#17a045" stroke-width="0.4" stroke-linejoin="round"/><path d="M6.7 11.8 L15.1 3.6" stroke="#fff" stroke-width="0.7" stroke-dasharray="0.9 1.3"/></svg><svg class="ic" style="left:614px;top:804px" width="14" height="18" viewBox="0 0 14 18"><path d="M0.9 5 Q1 3.6 3.8 3.4 L4.3 1.5 Q4.5 1 5.1 1 H9 Q9.6 1 9.8 1.5 L10.3 3.4 Q12.9 3.6 13 5 Z" fill="#f0141a"/><rect x="5.2" y="2" width="3.8" height="1" fill="#fff"/><rect x="0.9" y="6" width="12.1" height="1.1" rx="0.4" fill="#f0141a"/><path d="M1.8 7 H12.1 L11.9 15 Q11.8 16.8 10 16.8 H3.9 Q2.1 16.8 2 15 Z" fill="#f0141a"/><rect x="3.8" y="8" width="1.4" height="7" rx="0.6" fill="#fff"/><rect x="6" y="8" width="2.1" height="7" rx="0.6" fill="#fff"/><rect x="8.9" y="8" width="1.3" height="7" rx="0.6" fill="#fff"/></svg><svg class="ic" style="left:588px;top:840px" width="18" height="18" viewBox="0 0 18 18"><rect x="1.7" y="1.5" width="10.6" height="14.7" rx="0.6" fill="none" stroke="#17a045" stroke-width="1.25"/><path d="M5.1 13.6 L6.1 9.3 L14.4 2 L16.8 4.4 L8.8 12.8 Z" fill="#fff" stroke="#fff" stroke-width="2.2" stroke-linejoin="round"/><path d="M5.1 13.6 L6.1 9.3 L14.4 2 L16.8 4.4 L8.8 12.8 Z" fill="#17a045" stroke="#17a045" stroke-width="0.4" stroke-linejoin="round"/><path d="M6.7 11.8 L15.1 3.6" stroke="#fff" stroke-width="0.7" stroke-dasharray="0.9 1.3"/></svg><svg class="ic" style="left:614px;top:840px" width="14" height="18" viewBox="0 0 14 18"><path d="M0.9 5 Q1 3.6 3.8 3.4 L4.3 1.5 Q4.5 1 5.1 1 H9 Q9.6 1 9.8 1.5 L10.3 3.4 Q12.9 3.6 13 5 Z" fill="#f0141a"/><rect x="5.2" y="2" width="3.8" height="1" fill="#fff"/><rect x="0.9" y="6" width="12.1" height="1.1" rx="0.4" fill="#f0141a"/><path d="M1.8 7 H12.1 L11.9 15 Q11.8 16.8 10 16.8 H3.9 Q2.1 16.8 2 15 Z" fill="#f0141a"/><rect x="3.8" y="8" width="1.4" height="7" rx="0.6" fill="#fff"/><rect x="6" y="8" width="2.1" height="7" rx="0.6" fill="#fff"/><rect x="8.9" y="8" width="1.3" height="7" rx="0.6" fill="#fff"/></svg><svg class="ic" style="left:588px;top:876px" width="18" height="18" viewBox="0 0 18 18"><rect x="1.7" y="1.5" width="10.6" height="14.7" rx="0.6" fill="none" stroke="#17a045" stroke-width="1.25"/><path d="M5.1 13.6 L6.1 9.3 L14.4 2 L16.8 4.4 L8.8 12.8 Z" fill="#fff" stroke="#fff" stroke-width="2.2" stroke-linejoin="round"/><path d="M5.1 13.6 L6.1 9.3 L14.4 2 L16.8 4.4 L8.8 12.8 Z" fill="#17a045" stroke="#17a045" stroke-width="0.4" stroke-linejoin="round"/><path d="M6.7 11.8 L15.1 3.6" stroke="#fff" stroke-width="0.7" stroke-dasharray="0.9 1.3"/></svg><svg class="ic" style="left:614px;top:876px" width="14" height="18" viewBox="0 0 14 18"><path d="M0.9 5 Q1 3.6 3.8 3.4 L4.3 1.5 Q4.5 1 5.1 1 H9 Q9.6 1 9.8 1.5 L10.3 3.4 Q12.9 3.6 13 5 Z" fill="#f0141a"/><rect x="5.2" y="2" width="3.8" height="1" fill="#fff"/><rect x="0.9" y="6" width="12.1" height="1.1" rx="0.4" fill="#f0141a"/><path d="M1.8 7 H12.1 L11.9 15 Q11.8 16.8 10 16.8 H3.9 Q2.1 16.8 2 15 Z" fill="#f0141a"/><rect x="3.8" y="8" width="1.4" height="7" rx="0.6" fill="#fff"/><rect x="6" y="8" width="2.1" height="7" rx="0.6" fill="#fff"/><rect x="8.9" y="8" width="1.3" height="7" rx="0.6" fill="#fff"/></svg><svg class="ic" style="left:588px;top:912px" width="18" height="18" viewBox="0 0 18 18"><rect x="1.7" y="1.5" width="10.6" height="14.7" rx="0.6" fill="none" stroke="#17a045" stroke-width="1.25"/><path d="M5.1 13.6 L6.1 9.3 L14.4 2 L16.8 4.4 L8.8 12.8 Z" fill="#fff" stroke="#fff" stroke-width="2.2" stroke-linejoin="round"/><path d="M5.1 13.6 L6.1 9.3 L14.4 2 L16.8 4.4 L8.8 12.8 Z" fill="#17a045" stroke="#17a045" stroke-width="0.4" stroke-linejoin="round"/><path d="M6.7 11.8 L15.1 3.6" stroke="#fff" stroke-width="0.7" stroke-dasharray="0.9 1.3"/></svg><svg class="ic" style="left:614px;top:912px" width="14" height="18" viewBox="0 0 14 18"><path d="M0.9 5 Q1 3.6 3.8 3.4 L4.3 1.5 Q4.5 1 5.1 1 H9 Q9.6 1 9.8 1.5 L10.3 3.4 Q12.9 3.6 13 5 Z" fill="#f0141a"/><rect x="5.2" y="2" width="3.8" height="1" fill="#fff"/><rect x="0.9" y="6" width="12.1" height="1.1" rx="0.4" fill="#f0141a"/><path d="M1.8 7 H12.1 L11.9 15 Q11.8 16.8 10 16.8 H3.9 Q2.1 16.8 2 15 Z" fill="#f0141a"/><rect x="3.8" y="8" width="1.4" height="7" rx="0.6" fill="#fff"/><rect x="6" y="8" width="2.1" height="7" rx="0.6" fill="#fff"/><rect x="8.9" y="8" width="1.3" height="7" rx="0.6" fill="#fff"/></svg><svg class="ic" style="left:588px;top:948px" width="18" height="18" viewBox="0 0 18 18"><rect x="1.7" y="1.5" width="10.6" height="14.7" rx="0.6" fill="none" stroke="#17a045" stroke-width="1.25"/><path d="M5.1 13.6 L6.1 9.3 L14.4 2 L16.8 4.4 L8.8 12.8 Z" fill="#fff" stroke="#fff" stroke-width="2.2" stroke-linejoin="round"/><path d="M5.1 13.6 L6.1 9.3 L14.4 2 L16.8 4.4 L8.8 12.8 Z" fill="#17a045" stroke="#17a045" stroke-width="0.4" stroke-linejoin="round"/><path d="M6.7 11.8 L15.1 3.6" stroke="#fff" stroke-width="0.7" stroke-dasharray="0.9 1.3"/></svg><svg class="ic" style="left:614px;top:948px" width="14" height="18" viewBox="0 0 14 18"><path d="M0.9 5 Q1 3.6 3.8 3.4 L4.3 1.5 Q4.5 1 5.1 1 H9 Q9.6 1 9.8 1.5 L10.3 3.4 Q12.9 3.6 13 5 Z" fill="#f0141a"/><rect x="5.2" y="2" width="3.8" height="1" fill="#fff"/><rect x="0.9" y="6" width="12.1" height="1.1" rx="0.4" fill="#f0141a"/><path d="M1.8 7 H12.1 L11.9 15 Q11.8 16.8 10 16.8 H3.9 Q2.1 16.8 2 15 Z" fill="#f0141a"/><rect x="3.8" y="8" width="1.4" height="7" rx="0.6" fill="#fff"/><rect x="6" y="8" width="2.1" height="7" rx="0.6" fill="#fff"/><rect x="8.9" y="8" width="1.3" height="7" rx="0.6" fill="#fff"/></svg><svg class="ic" style="left:588px;top:984px" width="18" height="18" viewBox="0 0 18 18"><rect x="1.7" y="1.5" width="10.6" height="14.7" rx="0.6" fill="none" stroke="#17a045" stroke-width="1.25"/><path d="M5.1 13.6 L6.1 9.3 L14.4 2 L16.8 4.4 L8.8 12.8 Z" fill="#fff" stroke="#fff" stroke-width="2.2" stroke-linejoin="round"/><path d="M5.1 13.6 L6.1 9.3 L14.4 2 L16.8 4.4 L8.8 12.8 Z" fill="#17a045" stroke="#17a045" stroke-width="0.4" stroke-linejoin="round"/><path d="M6.7 11.8 L15.1 3.6" stroke="#fff" stroke-width="0.7" stroke-dasharray="0.9 1.3"/></svg><svg class="ic" style="left:614px;top:984px" width="14" height="18" viewBox="0 0 14 18"><path d="M0.9 5 Q1 3.6 3.8 3.4 L4.3 1.5 Q4.5 1 5.1 1 H9 Q9.6 1 9.8 1.5 L10.3 3.4 Q12.9 3.6 13 5 Z" fill="#f0141a"/><rect x="5.2" y="2" width="3.8" height="1" fill="#fff"/><rect x="0.9" y="6" width="12.1" height="1.1" rx="0.4" fill="#f0141a"/><path d="M1.8 7 H12.1 L11.9 15 Q11.8 16.8 10 16.8 H3.9 Q2.1 16.8 2 15 Z" fill="#f0141a"/><rect x="3.8" y="8" width="1.4" height="7" rx="0.6" fill="#fff"/><rect x="6" y="8" width="2.1" height="7" rx="0.6" fill="#fff"/><rect x="8.9" y="8" width="1.3" height="7" rx="0.6" fill="#fff"/></svg><svg class="ic" style="left:588px;top:1020px" width="18" height="18" viewBox="0 0 18 18"><rect x="1.7" y="1.5" width="10.6" height="14.7" rx="0.6" fill="none" stroke="#17a045" stroke-width="1.25"/><path d="M5.1 13.6 L6.1 9.3 L14.4 2 L16.8 4.4 L8.8 12.8 Z" fill="#fff" stroke="#fff" stroke-width="2.2" stroke-linejoin="round"/><path d="M5.1 13.6 L6.1 9.3 L14.4 2 L16.8 4.4 L8.8 12.8 Z" fill="#17a045" stroke="#17a045" stroke-width="0.4" stroke-linejoin="round"/><path d="M6.7 11.8 L15.1 3.6" stroke="#fff" stroke-width="0.7" stroke-dasharray="0.9 1.3"/></svg><svg class="ic" style="left:614px;top:1020px" width="14" height="18" viewBox="0 0 14 18"><path d="M0.9 5 Q1 3.6 3.8 3.4 L4.3 1.5 Q4.5 1 5.1 1 H9 Q9.6 1 9.8 1.5 L10.3 3.4 Q12.9 3.6 13 5 Z" fill="#f0141a"/><rect x="5.2" y="2" width="3.8" height="1" fill="#fff"/><rect x="0.9" y="6" width="12.1" height="1.1" rx="0.4" fill="#f0141a"/><path d="M1.8 7 H12.1 L11.9 15 Q11.8 16.8 10 16.8 H3.9 Q2.1 16.8 2 15 Z" fill="#f0141a"/><rect x="3.8" y="8" width="1.4" height="7" rx="0.6" fill="#fff"/><rect x="6" y="8" width="2.1" height="7" rx="0.6" fill="#fff"/><rect x="8.9" y="8" width="1.3" height="7" rx="0.6" fill="#fff"/></svg>
<div class="t" style="left:810.50px;top:336.7px;font-size:16px;color:#2a3646;transform:scaleX(0.9333);">5</div>
<div class="t" style="left:922.10px;top:336.7px;font-size:16px;color:#2a3646;transform:scaleX(0.9006);">Mini_OLT…</div>
<div class="t" style="left:1147.70px;top:336.7px;font-size:16px;color:#2a3646;transform:scaleX(0.8742);">ALCL-G-0…</div>
<div class="t" style="left:1372.70px;top:336.7px;font-size:16px;color:#2a3646;transform:scaleX(0.9044);">SN</div>
<div class="t" style="left:1485.30px;top:336.7px;font-size:16px;color:#2a3646;transform:scaleX(0.8864);">ALCLF9F…</div>
<div class="t" style="left:810.50px;top:372.7px;font-size:16px;color:#2a3646;transform:scaleX(0.9498);">33</div>
<div class="t" style="left:922.10px;top:372.7px;font-size:16px;color:#2a3646;transform:scaleX(0.9006);">Mini_OLT…</div>
<div class="t" style="left:1147.70px;top:372.7px;font-size:16px;color:#2a3646;transform:scaleX(0.8742);">ALCL-G-0…</div>
<div class="t" style="left:1372.70px;top:372.7px;font-size:16px;color:#2a3646;transform:scaleX(0.9044);">SN</div>
<div class="t" style="left:1485.30px;top:372.7px;font-size:16px;color:#2a3646;transform:scaleX(0.8864);">ALCLF9F…</div>
<div class="t" style="left:809.49px;top:408.7px;font-size:16px;color:#2a3646;transform:scaleX(1.0060);">18</div>
<div class="t" style="left:922.10px;top:408.7px;font-size:16px;color:#2a3646;transform:scaleX(0.9006);">Mini_OLT…</div>
<div class="t" style="left:1147.70px;top:408.7px;font-size:16px;color:#2a3646;transform:scaleX(0.8742);">ALCL-G-0…</div>
<div class="t" style="left:1372.70px;top:408.7px;font-size:16px;color:#2a3646;transform:scaleX(0.9044);">SN</div>
<div class="t" style="left:1485.30px;top:408.7px;font-size:16px;color:#2a3646;transform:scaleX(0.8864);">ALCLF9F…</div>
<div class="t" style="left:810.50px;top:444.7px;font-size:16px;color:#2a3646;transform:scaleX(0.9498);">40</div>
<div class="t" style="left:922.10px;top:444.7px;font-size:16px;color:#2a3646;transform:scaleX(0.9006);">Mini_OLT…</div>
<div class="t" style="left:1147.70px;top:444.7px;font-size:16px;color:#2a3646;transform:scaleX(0.8794);">ALCL-NO…</div>
<div class="t" style="left:1372.70px;top:444.7px;font-size:16px;color:#2a3646;transform:scaleX(0.9044);">SN</div>
<div class="t" style="left:1485.30px;top:444.7px;font-size:16px;color:#2a3646;transform:scaleX(0.8971);">ALCLB46…</div>
<div class="t" style="left:810.50px;top:480.7px;font-size:16px;color:#2a3646;transform:scaleX(0.9498);">64</div>
<div class="t" style="left:922.10px;top:480.7px;font-size:16px;color:#2a3646;transform:scaleX(0.9006);">Mini_OLT…</div>
<div class="t" style="left:1147.70px;top:480.7px;font-size:16px;color:#2a3646;transform:scaleX(0.8794);">ALCL-NO…</div>
<div class="t" style="left:1372.70px;top:480.7px;font-size:16px;color:#2a3646;transform:scaleX(0.9044);">SN</div>
<div class="t" style="left:1485.30px;top:480.7px;font-size:16px;color:#2a3646;transform:scaleX(0.8971);">ALCLB46…</div>
<div class="t" style="left:810.50px;top:516.7px;font-size:16px;color:#2a3646;transform:scaleX(0.9498);">36</div>
<div class="t" style="left:922.10px;top:516.7px;font-size:16px;color:#2a3646;transform:scaleX(0.9006);">Mini_OLT…</div>
<div class="t" style="left:1147.70px;top:516.7px;font-size:16px;color:#2a3646;transform:scaleX(0.8794);">ALCL-NO…</div>
<div class="t" style="left:1372.70px;top:516.7px;font-size:16px;color:#2a3646;transform:scaleX(0.9044);">SN</div>
<div class="t" style="left:1485.30px;top:516.7px;font-size:16px;color:#2a3646;transform:scaleX(0.8971);">ALCLB46…</div>
<div class="t" style="left:810.50px;top:552.7px;font-size:16px;color:#2a3646;transform:scaleX(0.9498);">34</div>
<div class="t" style="left:922.10px;top:552.7px;font-size:16px;color:#2a3646;transform:scaleX(0.9006);">Mini_OLT…</div>
<div class="t" style="left:1147.70px;top:552.7px;font-size:16px;color:#2a3646;transform:scaleX(0.8742);">ALCL-G-0…</div>
<div class="t" style="left:1372.70px;top:552.7px;font-size:16px;color:#2a3646;transform:scaleX(0.9044);">SN</div>
<div class="t" style="left:1485.30px;top:552.7px;font-size:16px;color:#2a3646;transform:scaleX(0.8843);">ALCLFD2…</div>
<div class="t" style="left:810.50px;top:588.7px;font-size:16px;color:#2a3646;transform:scaleX(0.9498);">30</div>
<div class="t" style="left:922.10px;top:588.7px;font-size:16px;color:#2a3646;transform:scaleX(0.9006);">Mini_OLT…</div>
<div class="t" style="left:1147.70px;top:588.7px;font-size:16px;color:#2a3646;transform:scaleX(0.8742);">ALCL-G-0…</div>
<div class="t" style="left:1372.70px;top:588.7px;font-size:16px;color:#2a3646;transform:scaleX(0.9044);">SN</div>
<div class="t" style="left:1485.30px;top:588.7px;font-size:16px;color:#2a3646;transform:scaleX(0.8843);">ALCLFD2…</div>
<div class="t" style="left:809.49px;top:624.7px;font-size:16px;color:#2a3646;transform:scaleX(1.0060);">13</div>
<div class="t" style="left:922.10px;top:624.7px;font-size:16px;color:#2a3646;transform:scaleX(0.9006);">Mini_OLT…</div>
<div class="t" style="left:1147.70px;top:624.7px;font-size:16px;color:#2a3646;transform:scaleX(0.8742);">ALCL-G-0…</div>
<div class="t" style="left:1372.70px;top:624.7px;font-size:16px;color:#2a3646;transform:scaleX(0.9044);">SN</div>
<div class="t" style="left:1485.30px;top:624.7px;font-size:16px;color:#2a3646;transform:scaleX(0.8783);">ALCLF9D…</div>
<div class="t" style="left:810.50px;top:660.7px;font-size:16px;color:#2a3646;transform:scaleX(0.9498);">52</div>
<div class="t" style="left:922.10px;top:660.7px;font-size:16px;color:#2a3646;transform:scaleX(0.9006);">Mini_OLT…</div>
<div class="t" style="left:1147.70px;top:660.7px;font-size:16px;color:#2a3646;transform:scaleX(0.8794);">ALCL-NO…</div>
<div class="t" style="left:1372.70px;top:660.7px;font-size:16px;color:#2a3646;transform:scaleX(0.9044);">SN</div>
<div class="t" style="left:1485.30px;top:660.7px;font-size:16px;color:#2a3646;transform:scaleX(0.8910);">ALCLB41…</div>
<div class="t" style="left:809.49px;top:696.7px;font-size:16px;color:#2a3646;transform:scaleX(1.0060);">17</div>
<div class="t" style="left:922.10px;top:696.7px;font-size:16px;color:#2a3646;transform:scaleX(0.9006);">Mini_OLT…</div>
<div class="t" style="left:1147.70px;top:696.7px;font-size:16px;color:#2a3646;transform:scaleX(0.8742);">ALCL-G-0…</div>
<div class="t" style="left:1372.70px;top:696.7px;font-size:16px;color:#2a3646;transform:scaleX(0.9044);">SN</div>
<div class="t" style="left:1485.30px;top:696.7px;font-size:16px;color:#2a3646;transform:scaleX(0.8864);">ALCLF9F…</div>
<div class="t" style="left:810.50px;top:732.7px;font-size:16px;color:#2a3646;transform:scaleX(0.9498);">29</div>
<div class="t" style="left:922.10px;top:732.7px;font-size:16px;color:#2a3646;transform:scaleX(0.9006);">Mini_OLT…</div>
<div class="t" style="left:1147.70px;top:732.7px;font-size:16px;color:#2a3646;transform:scaleX(0.8742);">ALCL-G-0…</div>
<div class="t" style="left:1372.70px;top:732.7px;font-size:16px;color:#2a3646;transform:scaleX(0.9044);">SN</div>
<div class="t" style="left:1485.30px;top:732.7px;font-size:16px;color:#2a3646;transform:scaleX(0.8843);">ALCLFD2…</div>
<div class="t" style="left:809.49px;top:768.7px;font-size:16px;color:#2a3646;transform:scaleX(1.0060);">15</div>
<div class="t" style="left:922.10px;top:768.7px;font-size:16px;color:#2a3646;transform:scaleX(0.9006);">Mini_OLT…</div>
<div class="t" style="left:1147.70px;top:768.7px;font-size:16px;color:#2a3646;transform:scaleX(0.8742);">ALCL-G-0…</div>
<div class="t" style="left:1372.70px;top:768.7px;font-size:16px;color:#2a3646;transform:scaleX(0.9044);">SN</div>
<div class="t" style="left:1485.30px;top:768.7px;font-size:16px;color:#2a3646;transform:scaleX(0.8864);">ALCLF9F…</div>
<div class="t" style="left:810.50px;top:804.7px;font-size:16px;color:#2a3646;transform:scaleX(0.9498);">41</div>
<div class="t" style="left:922.10px;top:804.7px;font-size:16px;color:#2a3646;transform:scaleX(0.9006);">Mini_OLT…</div>
<div class="t" style="left:1147.70px;top:804.7px;font-size:16px;color:#2a3646;transform:scaleX(0.8742);">ALCL-G-0…</div>
<div class="t" style="left:1372.70px;top:804.7px;font-size:16px;color:#2a3646;transform:scaleX(0.9044);">SN</div>
<div class="t" style="left:1485.30px;top:804.7px;font-size:16px;color:#2a3646;transform:scaleX(0.8864);">ALCLF9F…</div>
<div class="t" style="left:810.50px;top:840.7px;font-size:16px;color:#2a3646;transform:scaleX(0.9498);">20</div>
<div class="t" style="left:922.10px;top:840.7px;font-size:16px;color:#2a3646;transform:scaleX(0.9006);">Mini_OLT…</div>
<div class="t" style="left:1147.70px;top:840.7px;font-size:16px;color:#2a3646;transform:scaleX(0.8794);">ALCL-NO…</div>
<div class="t" style="left:1372.70px;top:840.7px;font-size:16px;color:#2a3646;transform:scaleX(0.9044);">SN</div>
<div class="t" style="left:1485.30px;top:840.7px;font-size:16px;color:#2a3646;transform:scaleX(0.8971);">ALCLB47…</div>
<div class="t" style="left:810.50px;top:876.7px;font-size:16px;color:#2a3646;transform:scaleX(0.9333);">7</div>
<div class="t" style="left:922.10px;top:876.7px;font-size:16px;color:#2a3646;transform:scaleX(0.9006);">Mini_OLT…</div>
<div class="t" style="left:1147.70px;top:876.7px;font-size:16px;color:#2a3646;transform:scaleX(0.8794);">ALCL-NO…</div>
<div class="t" style="left:1372.70px;top:876.7px;font-size:16px;color:#2a3646;transform:scaleX(0.9044);">SN</div>
<div class="t" style="left:1485.30px;top:876.7px;font-size:16px;color:#2a3646;transform:scaleX(0.9031);">ALCLB44…</div>
<div class="t" style="left:810.50px;top:912.7px;font-size:16px;color:#2a3646;transform:scaleX(0.9498);">31</div>
<div class="t" style="left:922.10px;top:912.7px;font-size:16px;color:#2a3646;transform:scaleX(0.9006);">Mini_OLT…</div>
<div class="t" style="left:1147.70px;top:912.7px;font-size:16px;color:#2a3646;transform:scaleX(0.8794);">ALCL-NO…</div>
<div class="t" style="left:1372.70px;top:912.7px;font-size:16px;color:#2a3646;transform:scaleX(0.9044);">SN</div>
<div class="t" style="left:1485.30px;top:912.7px;font-size:16px;color:#2a3646;transform:scaleX(0.8910);">ALCLB41…</div>
<div class="t" style="left:810.50px;top:948.7px;font-size:16px;color:#2a3646;transform:scaleX(0.9498);">34</div>
<div class="t" style="left:922.10px;top:948.7px;font-size:16px;color:#2a3646;transform:scaleX(0.9006);">Mini_OLT…</div>
<div class="t" style="left:1147.70px;top:948.7px;font-size:16px;color:#2a3646;transform:scaleX(0.8742);">ALCL-G-0…</div>
<div class="t" style="left:1372.70px;top:948.7px;font-size:16px;color:#2a3646;transform:scaleX(0.9044);">SN</div>
<div class="t" style="left:1485.30px;top:948.7px;font-size:16px;color:#2a3646;transform:scaleX(0.8864);">ALCLF9F…</div>
<div class="t" style="left:810.50px;top:984.7px;font-size:16px;color:#2a3646;transform:scaleX(0.9498);">38</div>
<div class="t" style="left:922.10px;top:984.7px;font-size:16px;color:#2a3646;transform:scaleX(0.9006);">Mini_OLT…</div>
<div class="t" style="left:1147.70px;top:984.7px;font-size:16px;color:#2a3646;transform:scaleX(0.8794);">ALCL-NO…</div>
<div class="t" style="left:1372.70px;top:984.7px;font-size:16px;color:#2a3646;transform:scaleX(0.9044);">SN</div>
<div class="t" style="left:1485.30px;top:984.7px;font-size:16px;color:#2a3646;transform:scaleX(0.9031);">ALCLB44…</div>
<div class="t" style="left:810.50px;top:1020.7px;font-size:16px;color:#2a3646;transform:scaleX(0.9498);">55</div>
<div class="t" style="left:922.10px;top:1020.7px;font-size:16px;color:#2a3646;transform:scaleX(0.9006);">Mini_OLT…</div>
<div class="t" style="left:1147.70px;top:1020.7px;font-size:16px;color:#2a3646;transform:scaleX(0.8794);">ALCL-NO…</div>
<div class="t" style="left:1372.70px;top:1020.7px;font-size:16px;color:#2a3646;transform:scaleX(0.9044);">SN</div>
<div class="t" style="left:1485.30px;top:1020.7px;font-size:16px;color:#2a3646;transform:scaleX(0.8910);">ALCLB41…</div>
</div></div>
<div class="a" style="left:1776px;top:273px;width:19px;height:772px;background:#fafafa"></div>
<div class="a" style="left:569px;top:1026px;width:1207px;height:19px;background:#fafafa"></div>
<div class="a" style="left:1780px;top:296px;width:11px;height:62px;background:#8b8b8b;border-radius:5.5px"></div>
<svg class="ic" style="left:1780.5px;top:280.5px" width="10" height="8" viewBox="0 0 10 8"><path d="M5 0.6 L9.4 7.4 H0.6 Z" fill="#8b8b8b" stroke="#8b8b8b" stroke-width="0.8" stroke-linejoin="round"/></svg>
<svg class="ic" style="left:1780.5px;top:1010.5px" width="10" height="8" viewBox="0 0 10 8"><path d="M5 7.4 L9.4 0.6 H0.6 Z" fill="#8b8b8b" stroke="#8b8b8b" stroke-width="0.8" stroke-linejoin="round"/></svg>
<div class="a" style="left:592px;top:1030px;width:958px;height:11px;background:#8b8b8b;border-radius:5.5px"></div>
<svg class="ic" style="left:576.5px;top:1030.5px" width="8" height="10" viewBox="0 0 8 10"><path d="M7.4 0.6 L0.8 5 L7.4 9.4 Z" fill="#8b8b8b" stroke="#8b8b8b" stroke-width="0.8" stroke-linejoin="round"/></svg>
<svg class="ic" style="left:1760.5px;top:1030.5px" width="8" height="10" viewBox="0 0 8 10"><path d="M0.6 0.6 L7.2 5 L0.6 9.4 Z" fill="#8b8b8b" stroke="#8b8b8b" stroke-width="0.8" stroke-linejoin="round"/></svg>
<!-- annotations -->
<svg class="ic" style="left:0;top:0" width="1802" height="1058" viewBox="0 0 1802 1058">
<rect x="1345.35" y="160.65" width="173.7" height="62.9" fill="rgba(255,246,110,0.38)" stroke="#e63b3b" stroke-width="1.6"/>
<rect x="605.15" y="255.85" width="1178.3" height="69" fill="rgba(255,246,110,0.38)" stroke="#e63b3b" stroke-width="1.6"/>
<g stroke="#e5161f" stroke-width="1.5" fill="#e5161f">
<line x1="1055.4" y1="810.5" x2="1007.6" y2="681.5"/><path d="M1005.9 677.2 L1010.3 685.2 L1004.4 686.4 Z" stroke-width="0.8"/>
<line x1="1277.8" y1="781.4" x2="1235.6" y2="682.6"/><path d="M1233.9 678.3 L1238.9 686 L1233 687.6 Z" stroke-width="0.8"/>
<line x1="1606.2" y1="768.5" x2="1567.2" y2="685.6"/><path d="M1565.3 681.3 L1570.5 688.8 L1564.8 690.6 Z" stroke-width="0.8"/>
</g></svg>
</body></html>
